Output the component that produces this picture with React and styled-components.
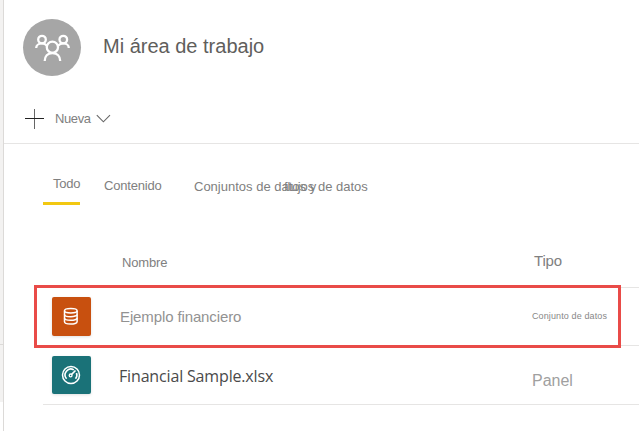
import React from "react";
import styled, { createGlobalStyle } from "styled-components";

const GlobalStyle = createGlobalStyle`
  * { box-sizing: border-box; }
  body { margin: 0; background: #fff; overflow: hidden; }
`;

const Page = styled.div`
  display: flex;
  width: 639px;
  height: 431px;
  background: #fff;
  font-family: "Liberation Sans", Arial, sans-serif;
`;

const Rail = styled.aside`
  display: flex;
  flex-direction: column;
  width: 4px;
  border-right: 1px solid #dcdad8;
`;

const RailBlock = styled.div`
  height: ${(p) => p.$height}px;
  background: #f3f2f1;
  border-bottom: ${(p) => (p.$divided ? "1px solid #dcdad8" : "none")};
`;

const Main = styled.main`
  flex: 1;
  min-width: 0;
`;

const Text = styled.span`
  display: block;
  white-space: nowrap;
  font-size: ${(p) => p.$size || 13}px;
  line-height: 20px;
  letter-spacing: ${(p) => p.$spacing || 0}px;
  color: ${(p) => p.$color || "#808080"};
`;

const Header = styled.header`
  display: flex;
  align-items: flex-start;
  height: 95px;
  padding: 19px 0 0 19px;
  gap: 22px;
`;

const Avatar = styled.div`
  width: 58px;
  height: 57px;
  border-radius: 50%;
  background: #a6a6a6;
  svg { display: block; }
`;

const Title = styled.h1`
  margin: 15px 0 0;
  font-size: 20px;
  line-height: 24px;
  font-weight: 400;
  white-space: nowrap;
  color: #605e5c;
`;

const Toolbar = styled.div`
  display: flex;
  align-items: center;
  height: 49px;
  padding-left: 20px;
  border-bottom: 1px solid #e6e5e4;
`;

const NewButton = styled.button`
  display: flex;
  align-items: center;
  padding: 0;
  border: 0;
  background: none;
  font-family: inherit;
  text-align: left;
  svg { display: block; }
`;

const ButtonLabel = styled(Text)`
  width: 41px;
  margin-left: 10px;
`;

const Tabs = styled.nav`
  display: flex;
  height: 61px;
  padding: 30px 0 0 39px;
`;

const Tab = styled.div`
  width: ${(p) => p.$width}px;
  height: 31px;
  padding: ${(p) => p.$top}px 0 0 ${(p) => p.$left || 0}px;
  border-bottom: ${(p) => (p.$active ? "3px solid #f2c811" : "none")};
`;

const Table = styled.section`
  position: relative;
  margin-left: 39px;
  padding-top: 32px;
`;

const Row = styled.div`
  display: grid;
  grid-template-columns: 76px 413px 1fr;
  height: ${(p) => p.$height}px;
  border-bottom: 1px solid #e6e5e4;
`;

const Cell = styled.div`
  padding: ${(p) => p.$top || 0}px 0 0 ${(p) => p.$left || 0}px;
`;

const Tile = styled.div`
  width: 39px;
  height: ${(p) => p.$height}px;
  border-radius: 2px;
  background: ${(p) => p.$color};
  box-shadow: 0 1px 3px rgba(0, 0, 0, 0.12);
  svg { display: block; }
`;

const FileName = styled(Text)`
  font-family: "Open Sans", "Noto Sans", sans-serif;
`;

const Highlight = styled.div`
  position: absolute;
  left: -9px;
  top: 80px;
  width: 587px;
  height: 63px;
  border: 3px solid #e94b48;
`;

const PeopleIcon = () => (
  <svg width="58" height="57" viewBox="0 0 58 57" fill="none" stroke="#fff" strokeWidth="2.3">
    <circle cx="19" cy="20.6" r="3.8" />
    <circle cx="40.3" cy="20.6" r="3.8" />
    <path d="M13.2 29C13.2 26.5 15.5 24.4 19 24.4C21 24.4 22.8 25.4 24 26.8" />
    <path d="M45.8 29C45.8 26.5 43.7 24.4 40.3 24.4C38 24.4 36.2 25.4 35 26.8" />
    <circle cx="29.4" cy="28.2" r="5.6" />
    <path d="M21.7 42C21.7 37.2 24.6 34 29.4 34C34.2 34 37.2 37.2 37.2 42" />
  </svg>
);

const PlusIcon = () => (
  <svg width="21" height="20" viewBox="0 0 21 20" fill="none" shapeRendering="crispEdges">
    <rect x="10" y="0" width="1" height="20" fill="#666" />
    <rect x="1" y="9" width="19" height="1" fill="#222" />
  </svg>
);

const ChevronIcon = () => (
  <svg width="15" height="10" viewBox="0 0 15 10" fill="none" stroke="#666" strokeWidth="1.1">
    <path d="M0.8 1.2L7.4 7.8L14 1.2" />
  </svg>
);

const DatabaseIcon = () => (
  <svg width="39" height="39" viewBox="0 0 39 39" fill="none" stroke="#fff" strokeWidth="1.5">
    <ellipse cx="18.8" cy="13.8" rx="6.3" ry="2.2" />
    <path d="M12.5 13.8V24.8C12.5 27.8 25.1 27.8 25.1 24.8V13.8" />
    <path d="M12.5 17.4C12.5 20.4 25.1 20.4 25.1 17.4M12.5 21.1C12.5 24.1 25.1 24.1 25.1 21.1" />
  </svg>
);

const GaugeIcon = () => (
  <svg width="39" height="38" viewBox="0 0 39 38" fill="none" stroke="#fff">
    <circle cx="19" cy="19" r="8.5" strokeWidth="1.5" />
    <path d="M14.6 22.8A5.8 5.8 0 0 1 21.8 13.9M24.5 17.1A5.8 5.8 0 0 1 23.5 22.8" strokeWidth="1.6" />
    <circle cx="18.6" cy="19.4" r="1.4" strokeWidth="1.3" />
    <path d="M19.6 18.4L23.5 14.5" strokeWidth="1.6" />
  </svg>
);

export default function App() {
  return (
    <Page>
      <GlobalStyle />
      <Rail>
        <RailBlock $height={345} $divided />
        <RailBlock $height={57} />
      </Rail>
      <Main>
        <Header>
          <Avatar><PeopleIcon /></Avatar>
          <Title>Mi área de trabajo</Title>
        </Header>
        <Toolbar>
          <NewButton>
            <PlusIcon />
            <ButtonLabel $spacing={-0.4}>Nueva</ButtonLabel>
            <ChevronIcon />
          </NewButton>
        </Toolbar>
        <Tabs>
          <Tab $width={37} $top={0} $left={10} $active>
            <Text $spacing={-0.2}>Todo</Text>
          </Tab>
          <Tab $width={114} $top={2} $left={24}>
            <Text $spacing={-0.2}>Contenido</Text>
          </Tab>
          <Tab $width={90} $top={3}>
            <Text>Conjuntos de datos y</Text>
          </Tab>
          <Tab $width={90} $top={3}>
            <Text>flujos de datos</Text>
          </Tab>
        </Tabs>
        <Table>
          <Row $height={51}>
            <Cell />
            <Cell $top={16} $left={3}><Text $spacing={-0.15}>Nombre</Text></Cell>
            <Cell $top={14} $left={2}><Text $size={15} $spacing={-0.2}>Tipo</Text></Cell>
          </Row>
          <Row $height={58}>
            <Cell $top={9} $left={9}><Tile $height={39} $color="#c8500f"><DatabaseIcon /></Tile></Cell>
            <Cell $top={19} $left={1}><Text $size={15} $spacing={-0.12} $color="#929292">Ejemplo financiero</Text></Cell>
            <Cell $top={18}><Text $size={9} $spacing={0.12} $color="#888">Conjunto de datos</Text></Cell>
          </Row>
          <Row $height={59}>
            <Cell $top={10} $left={9}><Tile $height={38} $color="#1a7278"><GaugeIcon /></Tile></Cell>
            <Cell $top={20}><FileName $size={16} $spacing={-0.16} $color="#4a4a4a">Financial Sample.xlsx</FileName></Cell>
            <Cell $top={25}><Text $size={16} $color="#a0a0a0">Panel</Text></Cell>
          </Row>
          <Highlight />
        </Table>
      </Main>
    </Page>
  );
}
